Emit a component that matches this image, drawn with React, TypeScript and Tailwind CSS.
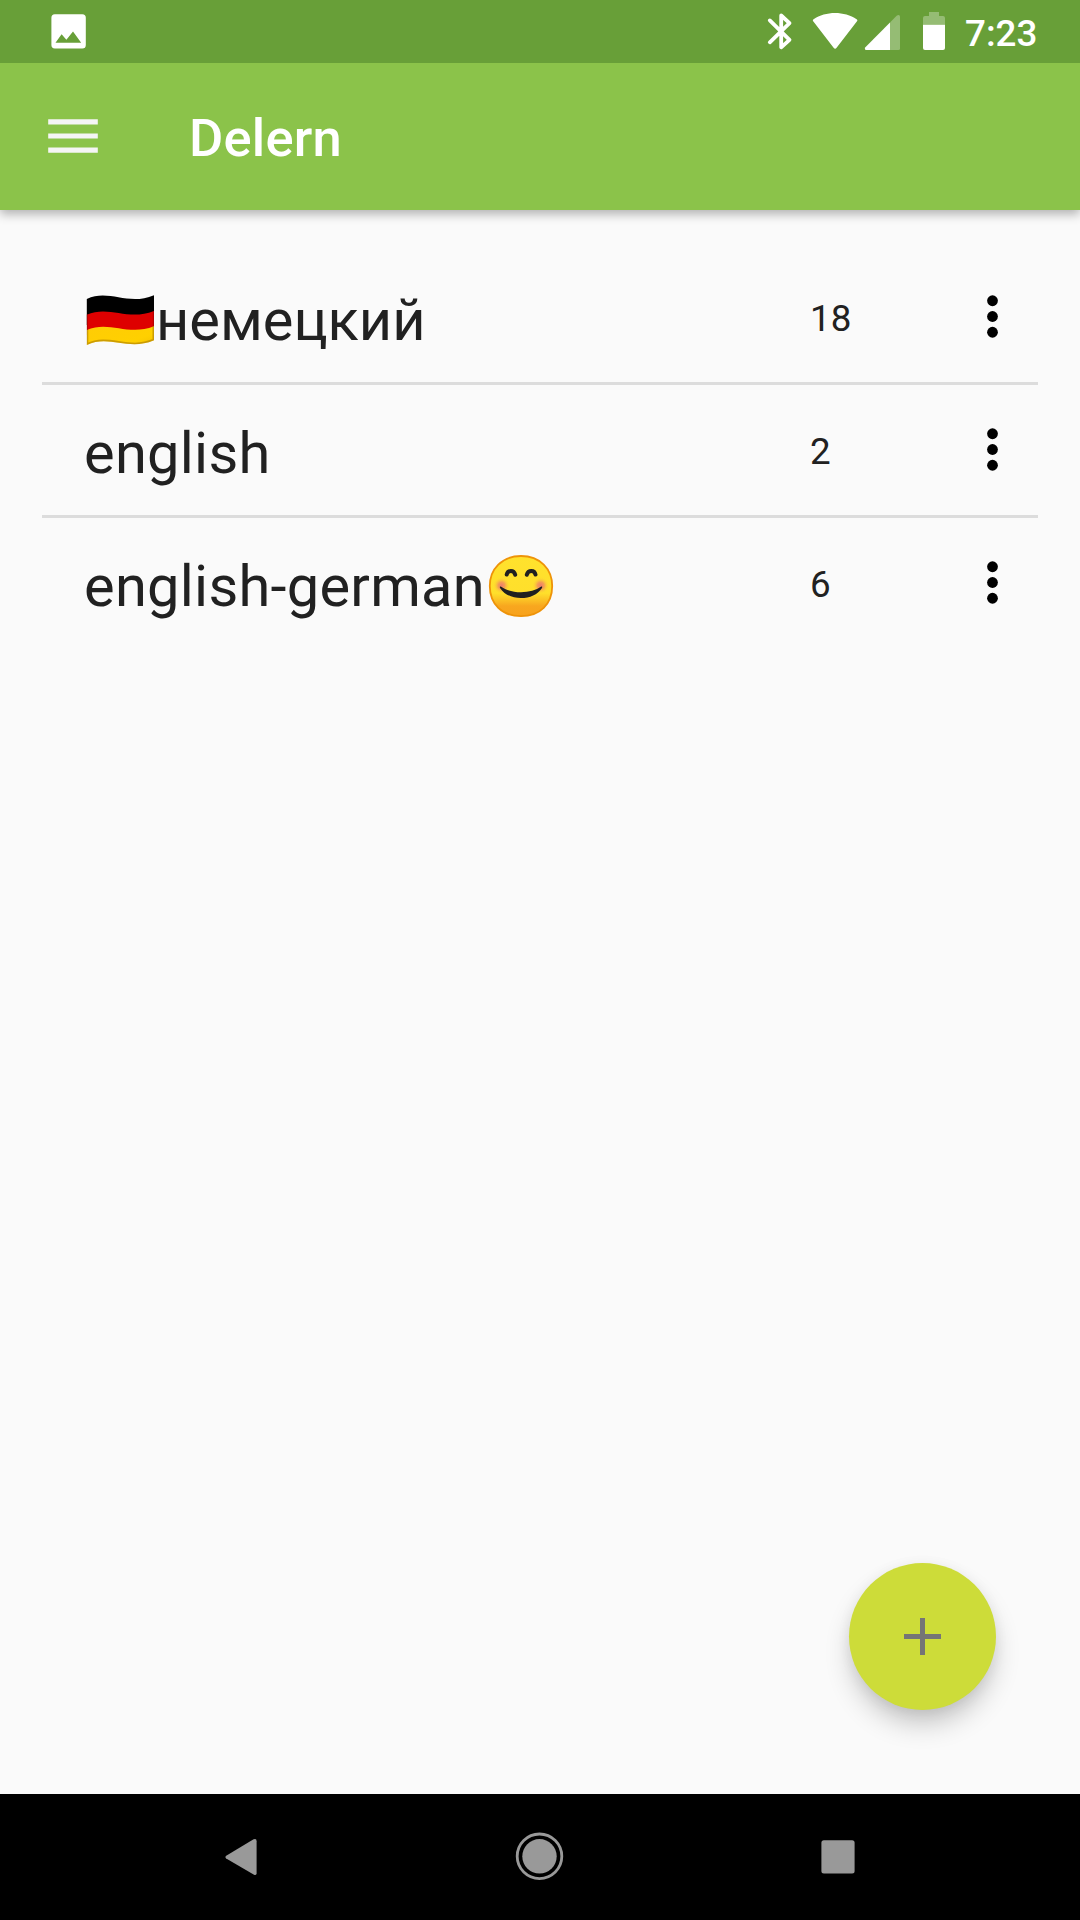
import React from "react";

function StatusBar() {
  return (
    <div className="relative z-10 flex h-[63px] items-start bg-[#689f38] pl-[51px] text-white">
      <svg className="mt-[14px] h-[35px] w-[35px]" viewBox="51 14 35 35" fill="none">
        <path
          fill="#fff"
          fillRule="evenodd"
          d="M54.8 14.2H82.3A3.5 3.5 0 0 1 85.8 17.7V45A3.5 3.5 0 0 1 82.3 48.5H54.8A3.5 3.5 0 0 1 51.4 45V17.7A3.5 3.5 0 0 1 54.8 14.2ZM55.5 42.7H81.2L73 31.4L66.4 39.8L61.6 34.3Z"
        />
      </svg>
      <div className="ml-auto flex">
        <svg className="mt-[12px] h-[39px] w-[28px]" viewBox="766 12 28 39" fill="none" stroke="#fff">
          <path
            d="M769.8 20.4L789.5 39.8L781.2 47.3V15.5L789.5 23.2L769.8 42.3"
            strokeWidth="3.8"
            strokeLinecap="round"
            strokeLinejoin="round"
          />
        </svg>
        <svg className="ml-[18px] mt-[12px] h-[39px] w-[46px]" viewBox="812 12 46 39" fill="#fff">
          <path d="M813.4 21.5Q812.2 20.3 813.6 19.3C825.5 10.9 844.6 10.9 856.6 19.3Q858 20.3 856.8 21.5L836.6 47.8Q835.1 49.8 833.6 47.8Z" />
        </svg>
        <svg className="ml-[6px] mt-[12px] h-[39px] w-[38px]" viewBox="864 12 38 39" fill="#fff">
          <path opacity=".3" d="M890 22.4L896.6 15.8Q897.6 15 898.6 15Q900 15 900 16.5V48.5Q900 50 898.5 50H890Z" />
          <path d="M890 22.4V50H866.2Q864.9 50 864.9 48.5V47.7Z" />
        </svg>
        <svg className="ml-[20px] mt-[12px] h-[39px] w-[24px]" viewBox="922 12 24 39" fill="#fff">
          <path opacity=".3" d="M929 12H939V16H943Q945 16 945 18V24.7H923V18Q923 16 925 16H929Z" />
          <path d="M923 24.7H945V48Q945 50 943 50H925Q923 50 923 48Z" />
        </svg>
        <span className="ml-[19px] mr-[42px] mt-[12px] w-[73px] whitespace-nowrap text-[36.75px] font-medium leading-[43px]">7:23</span>
      </div>
    </div>
  );
}

function AppBar() {
  return (
    <header className="relative flex h-[147px] items-center bg-[#8bc34a] pl-[48px] shadow-[0_4px_10px_0_rgba(0,0,0,0.3)]">
      <svg className="h-[35px] w-[50px]" viewBox="0 0 50 35" fill="#f5f5f5">
        <path d="M.2.2H49.8V5.4H.2ZM.2 14.4H49.8V19.6H.2ZM.2 28.5H49.8V33.8H.2Z" />
      </svg>
      <h1 className="ml-[91px] mt-[3px] text-[52.5px] font-medium leading-[62px] tracking-[0.2px] text-white">Delern</h1>
    </header>
  );
}

function GermanFlag() {
  return (
    <svg className="mr-px mt-[6px] h-[52px] w-[71px] shrink-0" viewBox="84 294 71 52" role="img" aria-label="Germany">
      <defs>
        <linearGradient id="gold" x1="0" y1="0" x2="1" y2="1">
          <stop offset="0" stopColor="#ffcc05" />
          <stop offset=".65" stopColor="#ffd000" />
          <stop offset="1" stopColor="#eebc00" />
        </linearGradient>
        <clipPath id="cloth">
          <path d="M86.8 299C109 288.5 128 306.5 154 295.2V340.2C128 351.5 109 334 86.8 345Z" />
        </clipPath>
      </defs>
      <g clipPath="url(#cloth)">
        <path fill="#000" d="M84 290H156V325H84Z" />
        <path fill="#de0000" d="M86.8 314.8C109 304.8 128 321.5 154 311V335H86.8Z" />
        <path fill="url(#gold)" d="M86.8 330C109 320 128 336.5 154 326.3V350H86.8Z" />
        <path fill="none" stroke="#9b6b00" strokeOpacity=".5" strokeWidth="2.6" d="M87 330V344.6C109 333.8 128 351.2 153.8 340V326" />
        <path fill="none" stroke="#8e0000" strokeOpacity=".5" strokeWidth="2" d="M87 314.5V330M153.8 311V326" />
      </g>
    </svg>
  );
}

function SmilingFace() {
  return (
    <svg className="ml-[3px] mt-[6px] h-[64px] w-[66px] shrink-0" viewBox="488 554 66 64" role="img" aria-label="Smiling face">
      <defs>
        <linearGradient id="face" x1="0" y1="0" x2="0" y2="1">
          <stop offset="0" stopColor="#ffe22d" />
          <stop offset=".62" stopColor="#ffdf2b" />
          <stop offset=".83" stopColor="#f8a71f" />
          <stop offset="1" stopColor="#f7a11b" />
        </linearGradient>
        <radialGradient id="blush">
          <stop offset="0" stopColor="#ed7770" stopOpacity=".95" />
          <stop offset=".4" stopColor="#f08264" stopOpacity=".7" />
          <stop offset="1" stopColor="#ffdf2b" stopOpacity="0" />
        </radialGradient>
      </defs>
      <path
        fill="url(#face)"
        stroke="#ee9309"
        strokeWidth="1.8"
        d="M521 556C540 556 552.2 569 552.2 586C552.2 604 540 616.2 521 616.2C502 616.2 489.8 604 489.8 586C489.8 569 502 556 521 556Z"
      />
      <circle cx="501.5" cy="585.5" r="8.5" fill="url(#blush)" />
      <circle cx="540.7" cy="585.5" r="8.5" fill="url(#blush)" />
      <path fill="none" stroke="#202020" strokeWidth="4" strokeLinecap="round" d="M506.7 574.6Q507.4 570.9 510.9 570.9Q514.2 570.9 515.2 574.8M526.8 574.8Q527.8 570.9 531.3 570.9Q534.8 570.9 535.5 574.6" />
      <path
        fill="#202020"
        d="M500.8 586.6C506 590.2 513 592.2 521 592.2C529 592.2 536 590.2 541.3 586.6C542.4 586 542.5 587 541.8 588.2C537.5 594.7 530 598 521 598C512 598 504.6 594.7 500.2 588.2C499.5 587 499.7 586 500.8 586.6Z"
      />
    </svg>
  );
}

function MoreIcon() {
  return (
    <svg className="mb-[2px] h-[63px] w-[63px]" viewBox="0 0 24 24" fill="#000">
      <circle cx="12" cy="6" r="2.05" />
      <circle cx="12" cy="12" r="2.05" />
      <circle cx="12" cy="18" r="2.05" />
    </svg>
  );
}

interface DeckProps {
  name: string;
  count: number;
  before?: React.ReactNode;
  after?: React.ReactNode;
}

function DeckRow({ name, count, before, after }: DeckProps) {
  return (
    <li className="flex h-[133px] items-center border-b-[3px] border-[#dcdcdc] pl-[42px] last:border-b-transparent">
      <div className="flex w-[726px] items-center">
        {before}
        <span className={`mt-[6px] whitespace-nowrap text-[57.75px] leading-[68px] ${before ? "" : "tracking-[0.27px]"}`}>{name}</span>
        {after}
      </div>
      <span className="mt-[3px] w-[109px] text-[36.75px] leading-[44px]">{count}</span>
      <button className="ml-[42px]" aria-label="More">
        <MoreIcon />
      </button>
    </li>
  );
}

function NavBar() {
  return (
    <nav className="flex h-[126px] items-center bg-black">
      <svg className="ml-[225px] h-[38px] w-[32px]" viewBox="225 1838 32 38" fill="#999">
        <path d="M226.2 1855.7L253.6 1839.3Q256.6 1838 256.6 1841.2V1873.2Q256.6 1876 253.6 1874.5L226.2 1858.5Q224.6 1857.1 226.2 1855.7Z" />
      </svg>
      <svg className="ml-[258px] h-[50px] w-[50px]" viewBox="0 0 50 50">
        <circle cx="24.5" cy="24.3" r="22.3" fill="none" stroke="#999" strokeWidth="2.8" />
        <circle cx="24.5" cy="24.3" r="17.2" fill="#999" />
      </svg>
      <svg className="ml-[256px] h-[36px] w-[36px]" viewBox="821 1839 36 36" fill="#999">
        <rect x="821.4" y="1840.2" width="33.2" height="33.4" rx="2.5" />
      </svg>
    </nav>
  );
}

export default function App() {
  return (
    <div className="flex h-[1920px] w-[1080px] flex-col overflow-hidden bg-[#fafafa] font-['Roboto',sans-serif] text-[#212121]">
      <StatusBar />
      <AppBar />
      <main className="relative flex-1 px-[42px] pt-[42px]">
        <ul>
          <DeckRow name="немецкий" count={18} before={<GermanFlag />} />
          <DeckRow name="english" count={2} />
          <DeckRow name="english-german" count={6} after={<SmilingFace />} />
        </ul>
        <button
          aria-label="Add"
          className="absolute bottom-[84px] right-[84px] flex h-[147px] w-[147px] items-center justify-center rounded-full bg-[#cddc39] shadow-[0_16px_28px_-4px_rgba(0,0,0,0.24),0_2px_14px_rgba(0,0,0,0.06)]"
        >
          <svg className="h-[37px] w-[37px]" viewBox="0 0 37 37" fill="#757575">
            <path d="M16 0H21V16H37V21H21V37H16V21H0V16H16Z" />
          </svg>
        </button>
      </main>
      <NavBar />
    </div>
  );
}
